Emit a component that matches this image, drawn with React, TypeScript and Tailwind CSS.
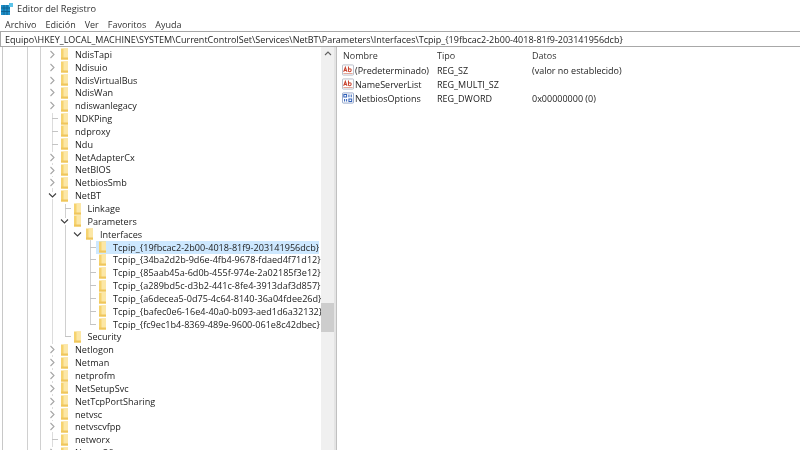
const sans = "font-['Open_Sans','Noto_Sans',sans-serif]";

type Row = { t: string; x: number; c?: 'r' | 'd'; sel?: boolean };

const rows: Row[] = [
  { t: 'NdisTapi', x: 0, c: 'r' },
  { t: 'Ndisuio', x: 0, c: 'r' },
  { t: 'NdisVirtualBus', x: 0, c: 'r' },
  { t: 'NdisWan', x: 0, c: 'r' },
  { t: 'ndiswanlegacy', x: 0, c: 'r' },
  { t: 'NDKPing', x: 0 },
  { t: 'ndproxy', x: 0 },
  { t: 'Ndu', x: 0 },
  { t: 'NetAdapterCx', x: 0, c: 'r' },
  { t: 'NetBIOS', x: 0, c: 'r' },
  { t: 'NetbiosSmb', x: 0, c: 'r' },
  { t: 'NetBT', x: 0, c: 'd' },
  { t: 'Linkage', x: 1 },
  { t: 'Parameters', x: 1, c: 'd' },
  { t: 'Interfaces', x: 2, c: 'd' },
  { t: 'Tcpip_{19fbcac2-2b00-4018-81f9-203141956dcb}', x: 3, sel: true },
  { t: 'Tcpip_{34ba2d2b-9d6e-4fb4-9678-fdaed4f71d12}', x: 3 },
  { t: 'Tcpip_{85aab45a-6d0b-455f-974e-2a02185f3e12}', x: 3 },
  { t: 'Tcpip_{a289bd5c-d3b2-441c-8fe4-3913daf3d857}', x: 3 },
  { t: 'Tcpip_{a6decea5-0d75-4c64-8140-36a04fdee26d}', x: 3 },
  { t: 'Tcpip_{bafec0e6-16e4-40a0-b093-aed1d6a32132}', x: 3 },
  { t: 'Tcpip_{fc9ec1b4-8369-489e-9600-061e8c42dbec}', x: 3 },
  { t: 'Security', x: 1 },
  { t: 'Netlogon', x: 0, c: 'r' },
  { t: 'Netman', x: 0, c: 'r' },
  { t: 'netprofm', x: 0, c: 'r' },
  { t: 'NetSetupSvc', x: 0, c: 'r' },
  { t: 'NetTcpPortSharing', x: 0, c: 'r' },
  { t: 'netvsc', x: 0, c: 'r' },
  { t: 'netvscvfpp', x: 0, c: 'r' },
  { t: 'networx', x: 0 },
  { t: 'Npsvc 36', x: 0, c: 'r' },
];

function Folder() {
  return (
    <svg width="8" height="12" viewBox="0 0 8 12" className="shrink-0">
      <rect x="0" y="0.5" width="7" height="11" fill="#f6d36f" />
      <rect x="2.5" y="0.5" width="4.5" height="11" fill="#fce7a6" />
      <rect x="0" y="9.5" width="7" height="2" fill="#efc65c" />
    </svg>
  );
}

function Chevron({ dir }: { dir: 'r' | 'd' }) {
  return dir === 'r' ? (
    <svg width="7" height="11" viewBox="0 0 7 11" className="shrink-0 bg-white">
      <path d="M1.5 2 L5 5.5 L1.5 9" fill="none" stroke="#a6a6a6" strokeWidth="1.1" />
    </svg>
  ) : (
    <svg width="9" height="7" viewBox="0 0 9 7" className="shrink-0 bg-white">
      <path d="M1 1.5 L4.5 5 L8 1.5" fill="none" stroke="#404040" strokeWidth="1.1" />
    </svg>
  );
}

function TreeRow({ r }: { r: Row }) {
  return (
    <div className="relative h-[12.85px] flex items-center">
      <div className={`flex items-center h-full ${['ml-[46px]', 'ml-[58.5px]', 'ml-[71px]', 'ml-[84px]'][r.x]}`}>
        <div className="w-[12px] h-full flex items-center justify-center shrink-0">
          {r.c ? <Chevron dir={r.c} /> : <div className="ml-[6px] w-[6px] h-px bg-[#c4c4c4]" />}
        </div>
        <div className={`flex items-center h-[13px] ${r.sel ? 'bg-[#cde8ff]' : ''}`}>
          <div className="ml-[3px]"><Folder /></div>
          <span className="ml-[6px] whitespace-nowrap text-[9.1px] leading-none text-[#222]">{r.t}</span>
        </div>
      </div>
    </div>
  );
}

function RegIcon({ kind }: { kind: 'ab' | 'bin' }) {
  return kind === 'ab' ? (
    <svg width="12" height="12" viewBox="0 0 13 12" className="shrink-0">
      <rect x="0.5" y="0.5" width="12" height="11" rx="1" fill="#fff" stroke="#b4b8c4" />
      <path d="M1.8 8 L3.6 3 L5.4 8 M2.5 6.4 H4.7" fill="none" stroke="#c8432f" strokeWidth="1.1" />
      <path d="M7 2.2 V8 M7 5.5 Q8.4 4 9.6 5 Q10.4 6 9.6 7.3 Q8.4 8.6 7 7.2" fill="none" stroke="#c8432f" strokeWidth="1.1" />
      <path d="M1.5 9.8 H11.5" stroke="#e2a08f" strokeWidth="1" />
    </svg>
  ) : (
    <svg width="12" height="12" viewBox="0 0 13 12" className="shrink-0">
      <rect x="0.5" y="0.5" width="12" height="11" rx="1" fill="#fff" stroke="#8fa3c8" />
      <path d="M2 2.2 H5 V5 H2 Z M7.5 2.2 V5.2 M10 2.2 V5.2 M2.8 7 V9.8 M5 7 V9.8 M7.5 7 H10.5 V9.8 H7.5 Z" fill="none" stroke="#2f5fb8" strokeWidth="1.1" />
    </svg>
  );
}

const values = [
  { k: 'ab' as const, n: '(Predeterminado)', t: 'REG_SZ', d: '(valor no establecido)' },
  { k: 'ab' as const, n: 'NameServerList', t: 'REG_MULTI_SZ', d: '' },
  { k: 'bin' as const, n: 'NetbiosOptions', t: 'REG_DWORD', d: '0x00000000 (0)' },
];

export default function App() {
  return (
    <div className={`w-[800px] h-[450px] overflow-hidden bg-white flex flex-col text-[#222] blur-[0.3px] ${sans}`}>
      <div className="h-[17px] flex items-center shrink-0">
        <svg width="12" height="12" viewBox="0 0 12 12" className="ml-[1px] shrink-0">
          <rect x="0" y="2" width="9" height="10" fill="#1f8fc9" />
          <path d="M3 2 V12 M6 2 V12 M0 5 H9 M0 8.5 H9" stroke="#0d5d8c" strokeWidth="0.8" />
          <rect x="8" y="0" width="4" height="4" fill="#5cc3e8" />
        </svg>
        <span className="ml-[4px] text-[9.25px] leading-none text-[#333]">Editor del Registro</span>
      </div>
      <div className="h-[12px] mt-[1px] flex items-center shrink-0 text-[9px] leading-none text-[#333]">
        <span className="ml-[5px]">Archivo</span>
        <span className="ml-[9px]">Edición</span>
        <span className="ml-[9px]">Ver</span>
        <span className="ml-[9px]">Favoritos</span>
        <span className="ml-[9px]">Ayuda</span>
      </div>
      <div className="mt-[1px] h-[16px] shrink-0 border-y border-l border-[#a8a8a8] flex items-center text-[9px] leading-none pl-[4px] whitespace-nowrap text-[#222]">
        Equipo\HKEY_LOCAL_MACHINE\SYSTEM\CurrentControlSet\Services\NetBT\Parameters\Interfaces\Tcpip_{'{'}19fbcac2-2b00-4018-81f9-203141956dcb{'}'}
      </div>
      <div className="flex flex-1 min-h-0">
        <div className="relative w-[321px] overflow-hidden shrink-0 pt-[1px]">
          <div className="absolute left-[2px] top-0 bottom-0 w-px bg-[#c8c8c8]" />
          <div className="absolute left-[27px] top-0 bottom-0 w-px bg-[#d0d0d0]" />
          <div className="absolute left-[40px] top-0 bottom-0 w-px bg-[#d0d0d0]" />
          <div className="absolute left-[52px] top-[66px] bottom-0 w-px bg-[#dcdcdc]" />
          <div className="absolute left-[65px] top-[157px] h-[133px] w-px bg-[#d0d0d0]" />
          <div className="absolute left-[90px] top-[193px] h-[84px] w-px bg-[#d0d0d0]" />
          {rows.map((r) => <TreeRow key={r.t} r={r} />)}
        </div>
        <div className="w-[13px] shrink-0 bg-[#f0f0f0] flex flex-col">
          <div className="h-[13px] flex items-center justify-center">
            <svg width="8" height="5" viewBox="0 0 8 5"><path d="M1 4 L4 1 L7 4" fill="none" stroke="#606060" strokeWidth="1.1" /></svg>
          </div>
          <div className="mt-[243px] h-[29px] bg-[#cdcdcd]" />
        </div>
        <div className="w-[3px] shrink-0 bg-[#e4e4e4] border-r border-[#c0c0c0]" />
        <div className="flex-1 pl-[5px] text-[9px] leading-none">
          <div className="h-[16px] flex items-center text-[#333]">
            <span className="w-[95px] pl-[1px]">Nombre</span>
            <span className="w-[95px]">Tipo</span>
            <span>Datos</span>
          </div>
          {values.map((v) => (
            <div key={v.n} className="h-[14px] flex items-center">
              <div className="w-[95px] flex items-center whitespace-nowrap">
                <RegIcon kind={v.k} />
                <span className="ml-[1px]">{v.n}</span>
              </div>
              <span className="w-[95px]">{v.t}</span>
              <span>{v.d}</span>
            </div>
          ))}
        </div>
      </div>
    </div>
  );
}
